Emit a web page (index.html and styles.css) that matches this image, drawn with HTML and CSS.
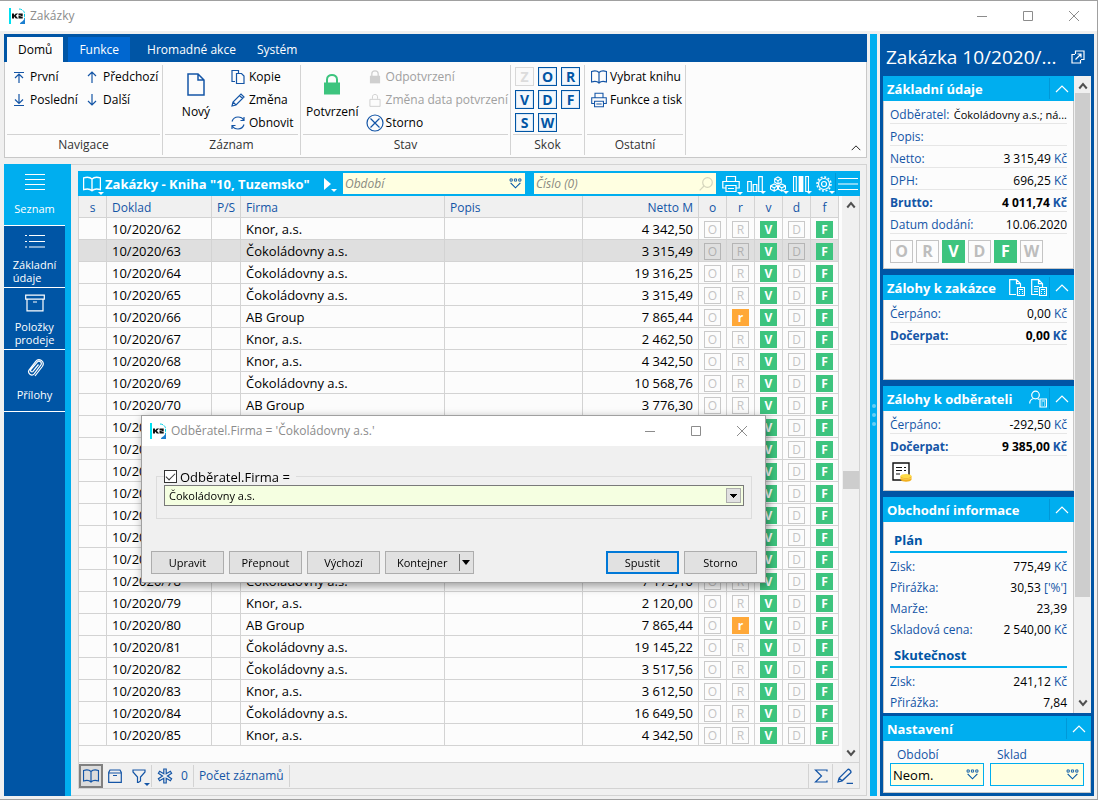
FILE: index.html
```html
<!DOCTYPE html>
<html lang="cs">
<head>
<meta charset="utf-8">
<title>Zakázky</title>
<link rel="stylesheet" href="styles.css">
</head>
<body>
<svg class="sprite" aria-hidden="true">
  <symbol id="k2" viewBox="0 0 16 16"><path d="M0 0h2v16H0z" fill="#00e0f0"/><path d="M3 5.500h2v1.800L6.800 5.500h2.300L6.800 7.800l2.400 2.700H6.800L5 8.500v2H3zM9.500 5.500h4.200v3h-2.200v.6h2.200v1.400H9.500V7.600h2.300v-.7H9.500z" fill="#111"/><path d="M10 1c3 0 5 2 5.500 4v6" fill="none" stroke="#00d0e8" stroke-width="1" stroke-dasharray="3 1"/><path d="M16 10v6h-5c0-2 3-2 5-6z" fill="#1c7fd0"/></symbol>
  <symbol id="min" viewBox="0 0 12 12"><path d="M1 6.500h10"/></symbol>
  <symbol id="max" viewBox="0 0 12 12"><path d="M1.500 1.500h9v9h-9z"/></symbol>
  <symbol id="close" viewBox="0 0 12 12"><path d="M1 1l10 10M11 1L1 11"/></symbol>
  <symbol id="first" viewBox="0 0 12 12"><path d="M1 1.500h10M6 12V3M2 7l4-4 4 4"/></symbol>
  <symbol id="last" viewBox="0 0 12 12"><path d="M1 11.500h10M6 0v9M2 5.500l4 4 4-4"/></symbol>
  <symbol id="up" viewBox="0 0 12 12"><path d="M6 12V1M2 5l4-4 4 4"/></symbol>
  <symbol id="down" viewBox="0 0 12 12"><path d="M6 0v11M2 7l4 4 4-4"/></symbol>
  <symbol id="page" viewBox="0 0 18 23"><path d="M1 1h10l6 6v15H1zM11 1v6h6"/></symbol>
  <symbol id="copy" viewBox="0 0 14 14"><path d="M4 11.500H1v-11h6.500V3M5.500 3.500h5l2.500 2.500v7.500H5.500z"/></symbol>
  <symbol id="pencil" viewBox="0 0 14 14"><path d="M1 13l1-4L10 1l3 3-8 8zM2 9l3 3M8.500 2.500l3 3"/></symbol>
  <symbol id="refresh" viewBox="0 0 14 14"><path d="M1 5.500C2 2.500 4.500 1 7 1s4.500 1 5.500 3M13 1v3.500H9.500M13 8.500C12 11.500 9.500 13 7 13s-4.500-1-5.500-3M1 13V9.500h3.500"/></symbol>
  <symbol id="lock" viewBox="0 0 18 22"><path d="M4 10V6c0-6 10-6 10 0v4" fill="none" stroke-width="2"/><path d="M1 9h16v12H1z" fill="currentColor" stroke="none"/></symbol>
  <symbol id="lockopen" viewBox="0 0 18 22"><path d="M5 9V6c0-5 8-5 8 0v3M1 10h16v11H1z" stroke-width="1.500"/></symbol>
  <symbol id="cancel" viewBox="0 0 18 18"><circle cx="9" cy="9" r="8"/><path d="M4.500 4.500l9 9M13.500 4.500l-9 9"/></symbol>
  <symbol id="book" viewBox="0 0 16 14"><path d="M8 2.500C6.500 1 3 .8.500 1.500v10.500c2.500-.7 6-.5 7.500 1 1.500-1.500 5-1.700 7.500-1V1.500C13 .8 9.500 1 8 2.500zM8 2.500V13"/></symbol>
  <symbol id="printer" viewBox="0 0 18 16"><path d="M4.500 5V.5h9V5M4 12H.8V5.500h16.400V12H14M4 9.500h10v6H4zM6 12.500h6"/></symbol>
  <symbol id="list" viewBox="0 0 20 18"><path d="M0 1.500h20M0 6.500h20M0 11.500h20M0 16.500h20"/></symbol>
  <symbol id="bullets" viewBox="0 0 20 14"><path d="M0 1.500h2M4 1.500h16M0 7.500h2M4 7.500h16M0 13h2M4 13h16"/></symbol>
  <symbol id="box" viewBox="0 0 20 17"><path d="M.7.700h18.600v4H.7zM2 5v11.300h16V5M8 7.500h4"/></symbol>
  <symbol id="boxs" viewBox="0 0 14 14"><path d="M2 1h10l1.300 2.500v9.800H.7V3.500zM.7 4h12.600M5 6.500h4"/></symbol>
  <symbol id="clip" viewBox="0 0 18 20"><path d="M12.500 6.500L7 13.300c-1.200 1.400-3.200-.2-2.200-1.600L11 4.300c2.200-2.500 5.600.2 3.700 2.900L8.200 15.800c-2.500 3-7.200-.6-5-3.900L9.800 3.300C13-.8 19.500 3.800 16.300 8.500L9 18"/></symbol>
  <symbol id="chart" viewBox="0 0 16 16"><path d="M.7 5.500h3.600v10H.7zM6.200 8.500h3.600v7H6.200zM11.700.7h3.600v14.800h-3.600z"/></symbol>
  <symbol id="cubes" viewBox="0 0 17 16"><path d="M8.500.5l3.500 2v3.500l-3.500 2-3.500-2V2.500zM5 2.500l3.500 2 3.500-2M8.500 4.500V8M4.500 8L8 10v3.500l-3.500 2-4-2V10zM.5 10l4 2L8 10M4.500 12v3.500M12.500 8l4 2v3.500l-4 2-3.500-2V10zM9 10l3.500 2 4-2M12.500 12v3.500"/></symbol>
  <symbol id="cols" viewBox="0 0 17 17"><path d="M.5.500h3v16h-3zM13.500.500h3v16h-3z"/><path d="M6 0h5v17H6z" fill="#fff" stroke="none"/></symbol>
  <symbol id="gear" viewBox="0 0 16 16"><circle cx="8" cy="8" r="5.500"/><circle cx="8" cy="8" r="2.500"/><circle cx="8" cy="8" r="7" stroke-width="1.500" stroke-dasharray="2 1.660"/></symbol>
  <symbol id="burger" viewBox="0 0 20 14"><path d="M0 1.500h20M0 7h20M0 12.500h20"/></symbol>
  <symbol id="search" viewBox="0 0 14 14"><circle cx="8.500" cy="5.500" r="4.800"/><path d="M5 9L.7 13.300"/></symbol>
  <symbol id="pick" viewBox="0 0 12 10"><path d="M1 .8h2v2H1zM5 .8h2v2H5zM9 .8h2v2H9z" stroke-width="0.800"/><path d="M1.500 4.500L6 9l4.500-4.500" stroke-width="1"/></symbol>
  <symbol id="filter" viewBox="0 0 14 14"><path d="M1 1h12v2L8.500 8v4L5.500 14V8L1 3z"/></symbol>
  <symbol id="aster" viewBox="0 0 16 16"><path d="M6.800 1h2.400v4.800l4.200-2.500 1.200 2L10.500 8l4.100 2.700-1.200 2-4.200-2.500V15H6.800v-4.800l-4.200 2.500-1.200-2L5.500 8 1.400 5.300l1.200-2 4.200 2.500z"/></symbol>
  <symbol id="sigma" viewBox="0 0 13 14"><path d="M12.500 2.500V1H1l6 6-6 6h11.500v-1.500"/></symbol>
  <symbol id="edit" viewBox="0 0 15 15"><path d="M1 13l1-3.500L10 1.500c1-1 4 1.500 2.800 3L4.800 12zM2 9.500L4.800 12M9 14.500h6"/></symbol>
  <symbol id="chev" viewBox="0 0 14 8"><path d="M1 7l6-6 6 6"/></symbol>
  <symbol id="sup" viewBox="0 0 8 6"><path d="M1 5l3-3.500L7 5" stroke-width="1.600"/></symbol>
  <symbol id="sdown" viewBox="0 0 8 6"><path d="M1 1l3 3.500L7 1" stroke-width="1.600"/></symbol>
  <symbol id="popout" viewBox="0 0 14 14"><path d="M4 4.500H1v8.500h8.500V10M4.500 4V1H13v8.500h-3M4.500 9.500L10 4M6.500 4H10v3.500"/></symbol>
  <symbol id="doccalc" viewBox="0 0 16 17"><path d="M7 15.500H.7V.7h6.800l4 4V8M7.500.7v4h4M8.500 8.500h7v8h-7zM10 10.500h4M10 12.500h1M13 12.500h1M10 14.500h1M13 14.500h1"/></symbol>
  <symbol id="doclines" viewBox="0 0 16 17"><path d="M7 15.500H.7V.7h6.800l4 4V8M7.500.7v4h4M3 7.500h5M3 10h4M3 12.500h4M8.500 8.500h7v8h-7zM10 10.500h4M10 12.500h1M13 12.500h1M10 14.500h1M13 14.500h1"/></symbol>
  <symbol id="person" viewBox="0 0 18 17"><circle cx="6.500" cy="4.500" r="3.800"/><path d="M.7 13c0-3 2-4.500 4-5M8.500 8l1.500 1M11 8.500h6.500v8H11zM12.500 10.500h3.500M12.500 12.500h1M15 12.500h1M12.500 14.500h1M15 14.500h1"/></symbol>
  <symbol id="invoice" viewBox="0 0 20 20"><path d="M1 1h16v17H1z" fill="#fff" stroke="#111" stroke-width="1.400"/><path d="M4 5.500h6M12 5.500h2M4 8.500h6M12 8.500h2M4 12h4" stroke="#111" stroke-width="1.200"/><path d="M8.500 14v3.800c1 2.600 10 2.600 11 0V14z" fill="#f2b01e" stroke="none"/><path d="M8.500 15.500c1 2.200 10 2.200 11 0" stroke="#ffe27a" stroke-width="0.700"/><ellipse cx="14" cy="14" rx="5.500" ry="2" fill="#ffdc4a" stroke="none"/></symbol>
</svg>

<div class="window">
  <header class="titlebar">
    <svg class="i16 logo"><use href="#k2"/></svg>
    <h1 class="wintitle">Zakázky</h1>
    <div class="winbtns">
      <button type="button" aria-label="Minimalizovat"><svg class="i12"><use href="#min"/></svg></button>
      <button type="button" aria-label="Maximalizovat"><svg class="i12"><use href="#max"/></svg></button>
      <button type="button" aria-label="Zavřít"><svg class="i12"><use href="#close"/></svg></button>
    </div>
  </header>

  <div class="workspace">
    <main class="main">
      <section class="ribbon">
        <nav class="tabs">
          <button type="button" class="tab tab-active">Domů</button>
          <button type="button" class="tab tab-hover">Funkce</button>
          <button type="button" class="tab">Hromadné akce</button>
          <button type="button" class="tab">Systém</button>
        </nav>
        <div class="groups">
          <div class="group g-nav">
            <div class="tools">
              <div class="col c-first">
                <button type="button" class="tool"><svg class="i12"><use href="#first"/></svg>První</button>
                <button type="button" class="tool"><svg class="i12"><use href="#last"/></svg>Poslední</button>
              </div>
              <div class="col">
                <button type="button" class="tool"><svg class="i12"><use href="#up"/></svg>Předchozí</button>
                <button type="button" class="tool"><svg class="i12"><use href="#down"/></svg>Další</button>
              </div>
            </div>
            <h2 class="gname">Navigace</h2>
          </div>
          <div class="group g-rec">
            <div class="tools">
              <button type="button" class="big"><svg class="ipage"><use href="#page"/></svg>Nový</button>
              <div class="col">
                <button type="button" class="tool"><svg class="i14"><use href="#copy"/></svg>Kopie</button>
                <button type="button" class="tool"><svg class="i14"><use href="#pencil"/></svg>Změna</button>
                <button type="button" class="tool"><svg class="i14"><use href="#refresh"/></svg>Obnovit</button>
              </div>
            </div>
            <h2 class="gname">Záznam</h2>
          </div>
          <div class="group g-state">
            <div class="tools">
              <button type="button" class="big"><svg class="ipage green"><use href="#lock"/></svg>Potvrzení</button>
              <div class="col">
                <button type="button" class="tool" disabled><svg class="ilock"><use href="#lock"/></svg>Odpotvrzení</button>
                <button type="button" class="tool" disabled><svg class="ilock"><use href="#lockopen"/></svg>Změna data potvrzení</button>
                <button type="button" class="tool"><svg class="i18"><use href="#cancel"/></svg>Storno</button>
              </div>
            </div>
            <h2 class="gname">Stav</h2>
          </div>
          <div class="group g-jump">
            <div class="jumps">
              <button type="button" class="jump" disabled>Z</button><button type="button" class="jump">O</button><button type="button" class="jump">R</button>
              <button type="button" class="jump">V</button><button type="button" class="jump">D</button><button type="button" class="jump">F</button>
              <button type="button" class="jump">S</button><button type="button" class="jump">W</button>
            </div>
            <h2 class="gname">Skok</h2>
          </div>
          <div class="group g-other">
            <div class="tools">
              <div class="col">
                <button type="button" class="tool"><svg class="i16"><use href="#book"/></svg>Vybrat knihu</button>
                <button type="button" class="tool"><svg class="i16"><use href="#printer"/></svg>Funkce a tisk</button>
              </div>
            </div>
            <h2 class="gname">Ostatní</h2>
          </div>
          <button type="button" class="collapse" aria-label="Sbalit"><svg class="i8"><use href="#chev"/></svg></button>
        </div>
      </section>

      <div class="content">
        <nav class="side">
          <button type="button" class="sideitem side-active"><svg class="i20"><use href="#list"/></svg><span>Seznam</span></button>
          <button type="button" class="sideitem"><svg class="i20"><use href="#bullets"/></svg><span>Základní<br>údaje</span></button>
          <button type="button" class="sideitem"><svg class="i20"><use href="#box"/></svg><span>Položky<br>prodeje</span></button>
          <button type="button" class="sideitem"><svg class="i20"><use href="#clip"/></svg><span>Přílohy</span></button>
        </nav>

        <div class="frame">
          <section class="grid">
            <header class="gridbar">
              <button type="button" class="gbtn drop" aria-label="Kniha"><svg class="i18"><use href="#book"/></svg></button>
              <h2 class="gridtitle">Zakázky - Kniha "10, Tuzemsko"</h2>
              <button type="button" class="gbtn drop play" aria-label="Spustit"></button>
              <label class="field"><input type="text" placeholder="Období" aria-label="Období"><svg class="ipick"><use href="#pick"/></svg></label>
              <label class="field"><input type="text" placeholder="Číslo (0)" aria-label="Číslo"><svg class="i14 faint"><use href="#search"/></svg></label>
              <div class="gicons">
                <button type="button" class="gbtn drop" aria-label="Tisk"><svg class="i18"><use href="#printer"/></svg></button>
                <button type="button" class="gbtn drop" aria-label="Graf"><svg class="i16"><use href="#chart"/></svg></button>
                <button type="button" class="gbtn drop" aria-label="Kostky"><svg class="i16"><use href="#cubes"/></svg></button>
                <button type="button" class="gbtn drop" aria-label="Sloupce"><svg class="i16"><use href="#cols"/></svg></button>
                <button type="button" class="gbtn drop" aria-label="Nastavení"><svg class="i16"><use href="#gear"/></svg></button>
              </div>
              <button type="button" class="gbtn burger" aria-label="Nabídka"><svg class="i20"><use href="#burger"/></svg></button>
            </header>
            <div class="gridbody">
              <div class="tablewrap">
                <table class="table">
                  <colgroup><col class="w-s"><col class="w-doc"><col class="w-ps"><col class="w-firm"><col><col class="w-net"><col class="w-f"><col class="w-f"><col class="w-f"><col class="w-f"><col class="w-f"></colgroup>
                  <thead><tr><th class="mid">s</th><th>Doklad</th><th>P/S</th><th>Firma</th><th>Popis</th><th class="num">Netto M</th><th class="mid">o</th><th class="mid">r</th><th class="mid">v</th><th class="mid">d</th><th class="mid">f</th></tr></thead>
                  <tbody id="rows"></tbody>
                </table>
              </div>
              <div class="scroll scroll-grid"><svg class="i8"><use href="#sup"/></svg><i class="thumb"></i><svg class="i8"><use href="#sdown"/></svg></div>
            </div>
            <footer class="gridfoot">
              <button type="button" class="fbtn pressed" aria-label="Kniha"><svg class="i16"><use href="#book"/></svg></button>
              <button type="button" class="fbtn" aria-label="Archiv"><svg class="i14"><use href="#boxs"/></svg></button>
              <button type="button" class="fbtn drop" aria-label="Filtr"><svg class="i14"><use href="#filter"/></svg></button>
              <span class="cell"><svg class="i16"><use href="#aster"/></svg>0</span>
              <span class="cell">Počet záznamů</span>
              <button type="button" class="fbtn sum" aria-label="Součet"><svg class="i14"><use href="#sigma"/></svg></button>
              <button type="button" class="fbtn edit" aria-label="Upravit"><svg class="i16"><use href="#edit"/></svg></button>
            </footer>
          </section>
        </div>
      </div>
    </main>

    <div class="splitter"><i></i><i></i><i></i></div>

    <aside class="panel">
      <header class="ptitle"><h2>Zakázka 10/2020/...</h2><button type="button" class="gbtn" aria-label="Otevřít"><svg class="i14"><use href="#popout"/></svg></button></header>
      <div class="pscroll">
        <div class="cards">
          <section class="card">
            <header class="chead"><h3>Základní údaje</h3><button type="button" class="fold" aria-label="Sbalit"><svg class="i14"><use href="#chev"/></svg></button></header>
            <div class="cbody">
              <p class="line"><span>Odběratel:</span><b class="long">Čokoládovny a.s.; ná...</b></p>
              <p class="line"><span>Popis:</span></p>
              <p class="line"><span>Netto:</span><b>3 315,49 <i>Kč</i></b></p>
              <p class="line"><span>DPH:</span><b>696,25 <i>Kč</i></b></p>
              <p class="line strong"><span>Brutto:</span><b>4 011,74 <i>Kč</i></b></p>
              <p class="line"><span>Datum dodání:</span><b>10.06.2020</b></p>
              <div class="flags"><span class="flag">O</span><span class="flag">R</span><span class="flag on">V</span><span class="flag">D</span><span class="flag on">F</span><span class="flag">W</span></div>
            </div>
          </section>
          <section class="card">
            <header class="chead"><h3>Zálohy k zakázce</h3><button type="button" class="gbtn" aria-label="Nová záloha"><svg class="i17"><use href="#doccalc"/></svg></button><button type="button" class="gbtn" aria-label="Seznam záloh"><svg class="i17"><use href="#doclines"/></svg></button><button type="button" class="fold" aria-label="Sbalit"><svg class="i14"><use href="#chev"/></svg></button></header>
            <div class="cbody c-short">
              <p class="line"><span>Čerpáno:</span><b>0,00 <i>Kč</i></b></p>
              <p class="line strong"><span>Dočerpat:</span><b>0,00 <i>Kč</i></b></p>
            </div>
          </section>
          <section class="card">
            <header class="chead"><h3>Zálohy k odběrateli</h3><button type="button" class="gbtn" aria-label="Odběratel"><svg class="i18"><use href="#person"/></svg></button><button type="button" class="fold" aria-label="Sbalit"><svg class="i14"><use href="#chev"/></svg></button></header>
            <div class="cbody c-short">
              <p class="line"><span>Čerpáno:</span><b>-292,50 <i>Kč</i></b></p>
              <p class="line strong"><span>Dočerpat:</span><b>9 385,00 <i>Kč</i></b></p>
              <svg class="i20 inv"><use href="#invoice"/></svg>
            </div>
          </section>
          <section class="card">
            <header class="chead"><h3>Obchodní informace</h3><button type="button" class="fold" aria-label="Sbalit"><svg class="i14"><use href="#chev"/></svg></button></header>
            <div class="cbody">
              <h4>Plán</h4>
              <p class="line plain"><span>Zisk:</span><b>775,49 <i>Kč</i></b></p>
              <p class="line plain"><span>Přirážka:</span><b>30,53 <i>['%']</i></b></p>
              <p class="line plain"><span>Marže:</span><b>23,39</b></p>
              <p class="line plain"><span>Skladová cena:</span><b>2 540,00 <i>Kč</i></b></p>
              <h4>Skutečnost</h4>
              <p class="line plain"><span>Zisk:</span><b>241,12 <i>Kč</i></b></p>
              <p class="line plain"><span>Přirážka:</span><b>7,84</b></p>
            </div>
          </section>
        </div>
        <div class="scroll scroll-panel"><svg class="i8"><use href="#sup"/></svg><i class="thumb"></i><svg class="i8"><use href="#sdown"/></svg></div>
      </div>
      <section class="card">
        <header class="chead"><h3>Nastavení</h3><button type="button" class="fold" aria-label="Sbalit"><svg class="i14"><use href="#chev"/></svg></button></header>
        <div class="cbody settings">
          <label><span>Období</span><span class="pickbox"><input type="text" value="Neom."><svg class="ipick"><use href="#pick"/></svg></span></label>
          <label><span>Sklad</span><span class="pickbox"><input type="text"><svg class="ipick"><use href="#pick"/></svg></span></label>
        </div>
      </section>
    </aside>
  </div>
</div>

<dialog open class="dialog" aria-labelledby="dlg-title">
  <header class="titlebar">
    <svg class="i16 logo"><use href="#k2"/></svg>
    <h2 class="wintitle" id="dlg-title">Odběratel.Firma = 'Čokoládovny a.s.'</h2>
    <div class="winbtns">
      <button type="button" aria-label="Minimalizovat"><svg class="i12"><use href="#min"/></svg></button>
      <button type="button" aria-label="Maximalizovat"><svg class="i12"><use href="#max"/></svg></button>
      <button type="button" aria-label="Zavřít"><svg class="i12"><use href="#close"/></svg></button>
    </div>
  </header>
  <form class="dform">
    <fieldset class="dset">
      <legend><input type="checkbox" id="use-firm" checked><label for="use-firm">Odběratel.Firma =</label></legend>
      <select class="dselect" aria-label="Firma"><option>Čokoládovny a.s.</option></select>
    </fieldset>
    <div class="dbtns">
      <button type="button" class="btn">Upravit</button>
      <button type="button" class="btn">Přepnout</button>
      <button type="button" class="btn">Výchozí</button>
      <button type="button" class="btn split">Kontejner<i></i></button>
      <span class="right">
        <button type="button" class="btn primary">Spustit</button>
        <button type="button" class="btn">Storno</button>
      </span>
    </div>
  </form>
</dialog>
<script src="app.js"></script>
</body>
</html>
```

FILE: styles.css
```css
* { box-sizing: border-box; }
:root {
  --blue: #0055a5;
  --cyan: #00aeef;
  --ink: #1455a6;
  --green: #3dc47e;
  --line: #d3d3d3;
  --paper: #fcfcfc;
  --gray: #f0f0f0;
}
body { margin: 0; font: 12px/16px "Open Sans", "Noto Sans", sans-serif; color: #000; background: var(--gray); }
h1, h2, h3, h4, p { margin: 0; font-size: inherit; font-weight: normal; }
button, input, select { font: inherit; color: inherit; margin: 0; }
button { background: none; border: 0; padding: 0; }
svg { flex: none; fill: none; stroke: currentColor; stroke-width: 1.2; display: block; }
.sprite { position: absolute; width: 0; height: 0; }
.i8 { width: 10px; height: 8px; }
.i12 { width: 12px; height: 12px; }
.i14 { width: 14px; height: 14px; }
.i16 { width: 16px; height: 16px; }
.i17 { width: 16px; height: 17px; }
.i18 { width: 18px; height: 18px; }
.i20 { width: 20px; height: 20px; }
.ipick { width: 13px; height: 11px; color: var(--blue); }
.ipage { width: 18px; height: 23px; stroke-width: 1.5; }
.ilock { width: 14px; height: 14px; }
.green { color: var(--green); }

.window { display: flex; flex-direction: column; height: 100vh; border: 1px solid #a0a0a0; border-left: 0; }
.titlebar { display: flex; align-items: center; height: 30px; flex: none; background: #fff; padding-left: 9px; gap: 5px; color: #8c8c8c; }
.wintitle { flex: 1; }
.logo { stroke: none; }
.winbtns { display: flex; }
.winbtns button { width: 46px; height: 28px; display: grid; place-items: center; }
.winbtns svg { stroke-width: 1; }
.workspace { flex: 1; min-height: 0; display: flex; gap: 3px; padding: 3px 3px 3px 4px; }
.main { flex: 1; min-width: 0; display: flex; flex-direction: column; gap: 6px; }
.splitter { width: 7px; background: var(--cyan); display: flex; flex-direction: column; align-items: center; justify-content: center; gap: 5px; }
.splitter i { width: 4px; height: 4px; border-radius: 2px; background: #66cef5; }

.ribbon { border: 1px solid #c8c8c8; border-top: 0; background: var(--paper); }
.tabs { display: flex; background: var(--blue); margin: 0 -1px; padding: 3px 3px 0; height: 28px; }
.tab { color: #fff; padding: 0 4px 0 17px; }
.tab.tab-active { background: var(--paper); color: #000; margin-right: 5px; padding: 0 11px; }
.tab.tab-hover { background: #0067d0; padding: 0 11px; }
.groups { display: flex; padding: 3px 0 2px; height: 95px; }
.group { display: flex; flex-direction: column; border-right: 1px solid var(--line); padding: 0 2px; }
.group > :first-child { flex: 1; }
.gname { border-top: 1px solid var(--line); text-align: center; height: 21px; line-height: 20px; color: #333; }
.tools { display: flex; }
.col { display: flex; flex-direction: column; }
.tool { display: flex; align-items: center; height: 23px; gap: 5px; white-space: nowrap; }
.tool svg { color: var(--ink); }
.tool:disabled, .tool:disabled svg { color: #a0a0a0; }
.tool:disabled svg { color: #cfcfcf; }
.g-nav { width: 158px; padding-left: 2px; }
.g-nav .tools { padding-left: 6px; }
.c-first { width: 73px; }
.g-rec { width: 138px; }
.big { display: flex; flex-direction: column; align-items: center; justify-content: center; gap: 8px; width: 62px; padding-bottom: 6px; }
.g-rec .big svg { color: var(--ink); }
.g-rec .col { padding-left: 4px; }
.g-rec .tool { gap: 4px; }
.g-state { width: 210px; }
.g-state .col { padding-left: 4px; }
.g-state .tool svg { width: 18px; }
.g-state .tool { gap: 2px; }
.g-jump { width: 74px; }
.jumps { display: grid; grid-template-columns: repeat(3, 19px); gap: 4px; align-content: start; padding: 2px; }
.jump { height: 19px; border: 1px solid var(--blue); color: var(--blue); font-weight: bold; font-size: 14px; line-height: 17px; background: #f4f8fc; box-shadow: inset 0 0 0 1px #dbe8f5; }
.jump:disabled { color: #dcdcdc; border-color: #d8d8d8; background: #fafafa; box-shadow: none; }
.g-other { width: 101px; }
.g-other .col { padding-left: 4px; }
.g-other .tool { gap: 3px; }
.collapse { margin: auto 5px 0 auto; height: 14px; }

.content { flex: 1; min-height: 0; display: flex; }
.side { width: 67px; background: var(--blue); border-right: 6px solid var(--cyan); display: flex; flex-direction: column; }
.sideitem { height: 62px; border-bottom: 1px solid #fff; color: #fff; display: flex; flex-direction: column; align-items: center; justify-content: space-between; padding: 5px 0 3px; font-size: 11px; line-height: 13px; text-align: left; }
.side-active { background: var(--cyan); }
.sideitem:first-child, .sideitem:last-child { padding: 8px 0 10px; }
.frame { flex: 1; min-width: 0; padding: 6px 6px 6px 7px; border: 1px solid var(--line); border-left: 0; display: flex; }
.grid { flex: 1; min-width: 0; display: flex; flex-direction: column; border: 1px solid var(--line); border-top: 0; }
.gridbar { height: 25px; flex: none; background: var(--cyan); color: #fff; display: flex; align-items: center; padding: 2px; margin: 0 -1px; gap: 9px; }
.gridbar > .gbtn:first-child { margin: 0 -5px 0 3px; }
.gridtitle { font-weight: bold; font-size: 13px; width: 207px; white-space: nowrap; }
.gbtn { color: #fff; display: grid; place-items: center; position: relative; }
.drop::after { content: ""; position: absolute; right: -3px; bottom: -2px; border: 3px solid transparent; border-top-color: currentColor; border-bottom: 0; }
.play { width: 13px; height: 13px; }
.play::before { content: ""; border: 6px solid transparent; border-left: 7px solid #fff; border-right: 0; }
.field { flex: 1; min-width: 0; height: 21px; background: #ffffe1; display: flex; align-items: center; padding: 0 3px 0 2px; }
.field input, .pickbox input { flex: 1; min-width: 0; width: 0; border: 0; padding: 0; background: none; outline: 0; }
.field input::placeholder { color: #8a8a80; font-style: italic; opacity: 1; }
.faint { color: #d5d5bc; }
.gicons { display: flex; align-items: center; gap: 7px; margin-left: -3px; }
.burger { border-left: 1px solid #0098d8; padding-left: 2px; height: 21px; margin-left: -6px; }
.gridbody { flex: 1; min-height: 0; display: flex; background: var(--paper); }
.tablewrap { flex: 1; min-width: 0; overflow: hidden; }
.table { width: 100%; table-layout: fixed; border-collapse: separate; border-spacing: 0; font-size: 13px; }
.table th, .table td { height: 22px; padding: 1px 5px 0; border-right: 1px solid var(--line); border-bottom: 1px solid var(--line); text-align: left; white-space: nowrap; overflow: hidden; line-height: 17px; }
.table th { background: var(--gray); color: var(--ink); font-weight: normal; font-size: 12px; }
.table .num { text-align: right; }
.table .mid { text-align: center; padding: 1px 0 0; }
.table .sel td { background: #dfdfdf; }
.w-s { width: 28px; }
.w-doc { width: 105px; }
.w-ps { width: 29px; }
.w-firm { width: 204px; }
.w-net { width: 116px; }
.w-f { width: 28px; }
.mark { display: block; width: 17px; height: 17px; margin: 0 auto; border: 1px solid #c9c9c9; color: #c4c4c4; font-size: 12px; line-height: 15px; text-align: center; }
.on, .part { background: var(--green); border-color: var(--green); color: #fff; font-weight: bold; }
.part { background: #ffa838; border-color: #ffa838; }
.sel .mark { border-color: #b5b5b5; color: #b0b0b0; }
.sel .mark.on { border-color: var(--green); color: #fff; }
.scroll { background: var(--gray); display: flex; flex-direction: column; align-items: center; color: #505050; flex: none; }
.thumb { background: #cdcdcd; }
.scroll-grid { width: 17px; margin-left: 3px; padding: 5px 0; justify-content: space-between; }
.scroll-grid .thumb { width: 16px; height: 18px; margin-top: 262px; margin-bottom: auto; }
.gridfoot { height: 26px; flex: none; border-top: 1px solid var(--line); display: flex; align-items: center; color: var(--ink); padding: 1px 0; }
.fbtn { width: 24px; height: 24px; display: grid; place-items: center; position: relative; }
.pressed { border: 2px solid #808080; background: #dcdcdc; }
.fbtn.drop::after { right: 1px; bottom: 2px; }
.gridfoot .cell { display: flex; align-items: center; gap: 8px; height: 22px; border-right: 1px solid var(--line); padding: 0 5px; }
.cell:first-of-type { border-left: 1px solid var(--line); }
.sum { margin-left: auto; border-left: 1px solid var(--line); }
.edit { border-left: 1px solid var(--line); margin-right: 3px; }

.panel { width: 214px; flex: none; background: var(--blue); display: flex; flex-direction: column; padding: 0 3px 3px; }
.ptitle { height: 42px; flex: none; display: flex; align-items: center; justify-content: space-between; color: #fff; padding: 3px 6px 0 3px; font-size: 19px; line-height: 24px; white-space: nowrap; }
.pscroll { flex: 1; min-height: 0; display: flex; margin-bottom: 3px; }
.cards { flex: 1; min-width: 0; overflow: hidden; display: flex; flex-direction: column; gap: 6px; }
.card { flex: none; }
.chead { height: 25px; background: var(--cyan); color: #fff; display: flex; align-items: center; padding-left: 4px; gap: 6px; }
.chead h3 { flex: 1; font-weight: bold; font-size: 13px; white-space: nowrap; }
.fold { width: 25px; height: 21px; border-left: 1px solid #0098d8; display: grid; place-items: center; }
.gbtn + .fold { margin-left: -4px; }
.fold svg { height: 8px; }
.cbody { background: var(--paper); border: 1px solid #c8c8c8; border-top: 0; padding: 1px 6px 5px; }
.line { display: flex; justify-content: space-between; gap: 2px; height: 22px; align-items: end; border-bottom: 1px solid #e6e6e6; color: var(--ink); white-space: nowrap; }
.line b { color: #000; font-weight: normal; }
.line .long { font-size: 11px; }
.line i { font-style: normal; color: var(--ink); }
.strong, .line.strong b { font-weight: bold; }
.line.plain { border: 0; height: 21px; }
.flags { display: flex; gap: 3px; padding-top: 6px; }
.flag { width: 23px; height: 23px; border: 1px solid #c4c4c4; color: #bdbdbd; font-weight: bold; font-size: 16px; line-height: 21px; text-align: center; }
.flag.on { border-color: var(--green); color: #fff; }
.c-short { height: 80px; }
.inv { margin: 6px 2px 0; }
h4 { border-bottom: 2px solid var(--cyan); color: var(--blue); font-weight: bold; font-size: 13px; line-height: 18px; padding: 8px 4px 0; margin-bottom: 1px; height: 30px; }
.settings { display: grid; grid-template-columns: 1fr 1fr; gap: 6px; padding: 6px; color: var(--ink); }
.settings label > span:first-child { padding-left: 7px; }
.pickbox { display: flex; align-items: center; height: 23px; border: 1px solid var(--cyan); background: #ffffe1; padding: 0 4px 0 2px; color: #000; font-size: 13px; }
.scroll-panel { width: 17px; padding: 6px 0; justify-content: space-between; }
.scroll-panel .thumb { width: 15px; height: 504px; margin: 3px 0 auto; }

.dialog { position: fixed; left: 141px; top: 415px; margin: 0; width: 625px; border: 1px solid #a0a0a0; padding: 0; color: #000; background: var(--gray); box-shadow: 2px 3px 9px rgba(0, 0, 0, 0.4); }
.dialog .titlebar { padding-left: 8px; }
.dform { padding: 22px 8px 8px 9px; }
.dset { margin: 0 5px; border: 1px solid #dcdcdc; padding: 0 7px 12px; height: 51px; }
.dset legend { display: flex; align-items: center; gap: 3px; padding: 0 6px 0 0; font-size: 13px; height: 17px; }
.dset legend input { appearance: none; width: 13px; height: 13px; border: 1px solid #333; background: #fff; display: grid; place-items: center; }
.dset legend input:checked::before { content: ""; width: 8px; height: 4px; border: solid #333; border-width: 0 0 1px 1px; rotate: -45deg; margin-bottom: 2px; }
.dselect { appearance: none; display: block; width: 100%; height: 21px; border: 1px solid #7a7a7a; border-radius: 0; padding: 0 4px; font-size: 11px; background: #f5ffe1; background-image: linear-gradient(#000, #000), linear-gradient(#000, #000), linear-gradient(#000, #000), linear-gradient(#000, #000), linear-gradient(#e1e1e1, #e1e1e1), linear-gradient(#adadad, #adadad); background-size: 7px 1px, 5px 1px, 3px 1px, 1px 1px, 13px 13px, 15px 15px; background-position: right 6px top 8px, right 7px top 9px, right 8px top 10px, right 9px top 11px, right 3px top 3px, right 2px top 2px; background-repeat: no-repeat; }
.dbtns { display: flex; gap: 5px; padding-top: 32px; font-size: 11px; align-items: center; }
.btn { min-width: 73px; height: 23px; border: 1px solid #adadad; background: #e1e1e1; }
.btn.split { display: flex; align-items: center; justify-content: space-between; padding: 0 1px 0 11px; width: 89px; }
.split i { border-left: 1px solid #777; height: 17px; width: 13px; display: grid; place-items: center; }
.split i::before { content: ""; border: 4px solid transparent; border-top: 5px solid #000; border-bottom: 0; }
.right { margin-left: auto; display: flex; gap: 5px; }
.btn.primary { border: 2px solid #0078d7; }
```

FILE: app.js
```javascript
const C = 'Čokoládovny a.s.', K = 'Knor, a.s.', A = 'AB Group';
const orders = [
  [62, K, '4 342,50'], [63, C, '3 315,49'], [64, C, '19 316,25'], [65, C, '3 315,49'],
  [66, A, '7 865,44', true], [67, K, '2 462,50'], [68, K, '4 342,50'], [69, C, '10 568,76'],
  [70, A, '3 776,30'], [71, '', ''], [72, '', ''], [73, '', ''], [74, '', ''], [75, '', ''],
  [76, '', ''], [77, '', ''], [78, C, '7 175,10'], [79, K, '2 120,00'], [80, A, '7 865,44', true],
  [81, C, '19 145,22'], [82, C, '3 517,56'], [83, K, '3 612,50'], [84, C, '16 649,50'], [85, K, '4 342,50'],
];
const mark = (letter, kind = '') => `<td class="mid"><span class="mark ${kind}">${letter}</span></td>`;
document.getElementById('rows').innerHTML = orders.map(([no, firm, net, partial]) =>
  `<tr class="${no === 63 ? 'sel' : ''}"><td></td><td>10/2020/${no}</td><td></td><td>${firm}</td><td></td>` +
  `<td class="num">${net}</td>${mark('O')}${partial ? mark('r', 'part') : mark('R')}${mark('V', 'on')}${mark('D')}${mark('F', 'on')}</tr>`
).join('');
```
